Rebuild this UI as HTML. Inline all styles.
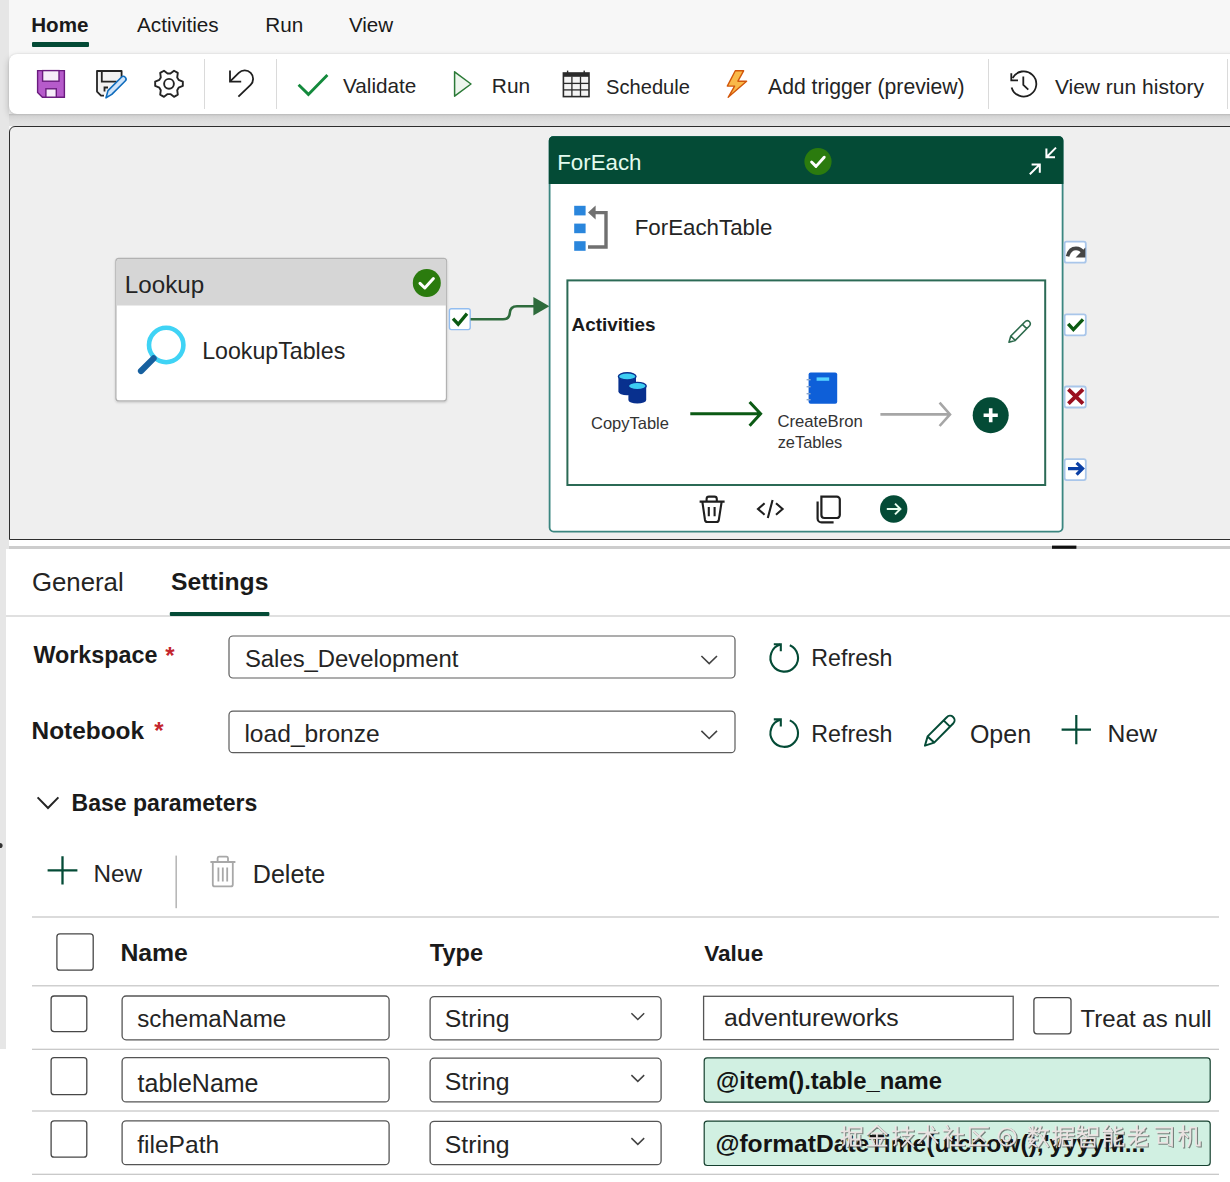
<!DOCTYPE html>
<html><head><meta charset="utf-8"><style>
html,body{margin:0;padding:0}
body{width:1230px;height:1182px;position:relative;overflow:hidden;background:#f7f7f7;font-family:"Liberation Sans",sans-serif}
.b{position:absolute}
.t{position:absolute;line-height:1;white-space:nowrap;font-family:"Liberation Sans",sans-serif}
svg{position:absolute;left:0;top:0}
</style></head><body>
<div class="b" style="left:0;top:0;width:8.5px;height:549px;background:#e6e6e6"></div>
<div class="b" style="left:8.5px;top:54px;width:1240px;height:60px;background:#fff;border-radius:8px;box-shadow:0 3px 7px rgba(0,0,0,0.22),0 0 2px rgba(0,0,0,0.12)"></div>
<div class="b" style="left:32px;top:42px;width:57px;height:5px;background:#044b36;border-radius:1px"></div>
<div class="b" style="left:8.5px;top:114px;width:1240px;height:12px;background:linear-gradient(#b9b9b9 0px,#d3d3d3 2px,#dfdfdf 7px,#e3e3e3 12px)"></div>
<div class="b" style="left:9px;top:126px;width:1240px;height:412px;background:#efefef;border:1px solid #2e2e2e;border-top-left-radius:6px;box-sizing:content-box"></div>
<div class="b" style="left:8.5px;top:540px;width:1240px;height:6px;background:#fff"></div>
<div class="b" style="left:8.5px;top:546px;width:1240px;height:3px;background:#cdcdcd"></div>
<div class="b" style="left:0;top:549px;width:6px;height:500px;background:#e6e6e6"></div>
<div class="b" style="left:6px;top:549px;width:1230px;height:640px;background:#fff"></div>
<div class="b" style="left:0;top:1049px;width:6px;height:140px;background:#fff"></div>
<div class="b" style="left:6px;top:614.5px;width:1230px;height:2px;background:#e0e0e0"></div>
<svg width="1230" height="1182" viewBox="0 0 1230 1182"><defs><filter id="sh" x="-5%" y="-5%" width="110%" height="115%"><feDropShadow dx="0" dy="1" stdDeviation="1" flood-color="#000" flood-opacity="0.18"/></filter><filter id="gl" x="-20%" y="-20%" width="140%" height="140%"><feGaussianBlur stdDeviation="0.5"/></filter></defs>
<path d="M37.6 70.6 H64.4 V97.2 H42.4 L37.6 92.4 Z" fill="#b65bcb" stroke="#6a1b7e" stroke-width="1.4"/>
<rect x="42.6" y="70.6" width="16.4" height="10.6" fill="#f6ecf9" stroke="#6a1b7e" stroke-width="1.4"/>
<rect x="45.9" y="88.8" width="10.4" height="8.4" fill="#f6ecf9" stroke="#6a1b7e" stroke-width="1.4"/>
<path d="M121.6 77 V71 H97 V91.6 L101 95.6 H104" fill="#f2f2f2" stroke="#242424" stroke-width="1.8" stroke-linejoin="round"/>
<path d="M101.8 71 V81.6 H116.6" fill="none" stroke="#242424" stroke-width="1.8"/>
<path d="M104.5 91.5 V87.5 H108" fill="none" stroke="#242424" stroke-width="1.8"/>
<path d="M106 97.8 L108 90.6 L121.4 77.2 A2.6 2.6 0 0 1 125.2 81 L111.8 94.4 Z" fill="#cfe4fa" stroke="#0f6cbd" stroke-width="1.6" stroke-linejoin="round"/>
<path d="M174.02 70.73 L177.81 72.92 L177.22 77.43 L178.63 79.87 L182.83 81.61 L182.83 85.99 L178.63 87.73 L177.22 90.17 L177.81 94.68 L174.02 96.87 L170.41 94.10 L167.59 94.10 L163.98 96.87 L160.19 94.68 L160.78 90.17 L159.37 87.73 L155.17 85.99 L155.17 81.61 L159.37 79.87 L160.78 77.43 L160.19 72.92 L163.98 70.73 L167.59 73.50 L170.41 73.50 Z" fill="none" stroke="#242424" stroke-width="1.9" stroke-linejoin="round"/>
<circle cx="169" cy="83.8" r="4.9" fill="none" stroke="#242424" stroke-width="1.9"/>
<rect x="204.0" y="59" width="1" height="50" fill="#dadada"/>
<rect x="276.0" y="59" width="1" height="50" fill="#dadada"/>
<rect x="988.0" y="59" width="1" height="50" fill="#dadada"/>
<rect x="1227.0" y="59" width="1" height="50" fill="#dadada"/>
<path d="M230 70.5 V81.6 H241.2" fill="none" stroke="#1f1f1f" stroke-width="1.8"/>
<path d="M230.4 81.2 L238.8 72.8 A8.4 8.4 0 0 1 250.6 84.8 L238.4 96.6" fill="none" stroke="#1f1f1f" stroke-width="1.8"/>
<path d="M298.6 84.8 L308.4 94.4 L327.4 75" fill="none" stroke="#138a3c" stroke-width="2.9"/>
<path d="M454.6 71.8 V96.2 L471 84 Z" fill="#eef6ee" stroke="#2b7a37" stroke-width="1.5" stroke-linejoin="round"/>
<rect x="563.4" y="73" width="25.6" height="23.6" fill="#f4f4f4" stroke="#2a2a2a" stroke-width="1.6"/>
<rect x="563.4" y="73" width="25.6" height="3.8" fill="#2a2a2a"/>
<rect x="571.25" y="76.5" width="1.3" height="20" fill="#2a2a2a"/>
<rect x="579.85" y="76.5" width="1.3" height="20" fill="#2a2a2a"/>
<rect x="563.4" y="82.75" width="25.6" height="1.3" fill="#2a2a2a"/>
<rect x="563.4" y="89.25" width="25.6" height="1.3" fill="#2a2a2a"/>
<rect x="566.9" y="70.6" width="1.4" height="4.4" fill="#2a2a2a"/>
<rect x="583.5" y="70.6" width="1.4" height="4.4" fill="#2a2a2a"/>
<path d="M735.3 70.8 L743.6 70.8 L737.9 81.2 L746.6 81.2 L728.2 97.3 L734.6 86.1 L727.3 86.1 Z" fill="#f9b949" stroke="#d2570b" stroke-width="1.4" stroke-linejoin="round"/>
<path d="M1011.6 87.4 A12.6 12.6 0 1 0 1012.6 78" fill="none" stroke="#1f1f1f" stroke-width="1.8"/>
<path d="M1011.3 73.2 V80.4 H1018" fill="none" stroke="#1f1f1f" stroke-width="1.8"/>
<path d="M1023.3 76.4 V84.8 L1028.3 89.6" fill="none" stroke="#1f1f1f" stroke-width="1.8"/>
<rect x="115.9" y="258.5" width="330.6" height="142.4" rx="3" fill="#ffffff" stroke="#b2b2b2" stroke-width="1.3" filter="url(#sh)"/>
<path d="M116.4 305.5 V261.5 A2.6 2.6 0 0 1 119 259 H443.6 A2.6 2.6 0 0 1 446.2 261.5 V305.5 Z" fill="#d6d6d6"/>
<circle cx="426.8" cy="283" r="14" fill="#2b7b0e"/>
<path d="M420 283.4 L424.8 288 L433.4 278.6" fill="none" stroke="#fff" stroke-width="3" stroke-linecap="round" stroke-linejoin="round"/>
<circle cx="166.2" cy="345" r="17.2" fill="none" stroke="#3fd3f5" stroke-width="4.6"/>
<path d="M153.6 358.4 L141 371" fill="none" stroke="#17609f" stroke-width="6.2" stroke-linecap="round"/>
<rect x="449.4" y="308.8" width="20.8" height="20.8" rx="2" fill="#fff" stroke="#92bdf0" stroke-width="1.4"/>
<path d="M453 318.6 L458.2 324.2 L467 313.6" fill="none" stroke="#0b5a12" stroke-width="3.3"/>
<path d="M470.6 319.2 H503 Q509.4 319.2 509.8 313 Q510.2 306.2 517 306.2 H535" fill="none" stroke="#2e6b3c" stroke-width="2.6"/>
<path d="M533.4 297 L549.4 306.2 L533.4 315.4 Z" fill="#2e6b3c"/>
<rect x="549.6" y="137" width="513" height="394.6" rx="4" fill="#ffffff" stroke="#3b8680" stroke-width="1.8"/>
<path d="M548.8 184 V140.5 A4.2 4.2 0 0 1 553 136.3 H1059.2 A4.2 4.2 0 0 1 1063.4 140.5 V184 Z" fill="#044b36"/>
<circle cx="818" cy="161.5" r="13.6" fill="#2b7b0e"/>
<path d="M811.6 162 L816 166.4 L824.2 157.2" fill="none" stroke="#fff" stroke-width="2.9" stroke-linecap="round" stroke-linejoin="round"/>
<path d="M1056 147.6 L1046.4 157.2 M1046.4 148.6 V157.2 H1055" fill="none" stroke="#fff" stroke-width="2"/>
<path d="M1029.8 174.2 L1039.8 164.4 M1031.6 164.4 H1039.8 V172.8" fill="none" stroke="#fff" stroke-width="2"/>
<rect x="574.2" y="205.8" width="11.4" height="9.6" fill="#2a86dc"/>
<rect x="574.2" y="223.6" width="11.4" height="9.6" fill="#2a86dc"/>
<rect x="574.2" y="241.2" width="11.4" height="9.6" fill="#2a86dc"/>
<path d="M594 212.6 H606 V247 H588" fill="none" stroke="#707070" stroke-width="3.4"/>
<path d="M588 212.6 L595.6 205.6 V219.6 Z" fill="#707070"/>
<rect x="567.4" y="280.4" width="477.8" height="204.6" fill="#ffffff" stroke="#2b6a55" stroke-width="2"/>
<path d="M1009 342.2 L1010.8 336 L1025 321.8 A2.5 2.5 0 0 1 1029.6 325.8 L1015.2 340.4 Z M1010.8 336 L1015.2 340.4 M1022.4 324.4 L1027 328.8" fill="none" stroke="#2d6b4d" stroke-width="1.6" stroke-linejoin="round"/>
<path d="M618.4 376.4 V391.6 A8.8 3.6 0 0 0 636 391.6 V376.4 Z" fill="#08308e"/>
<ellipse cx="627.2" cy="376.4" rx="8.8" ry="3.6" fill="#3ccdf2" stroke="#08308e" stroke-width="1.4"/>
<path d="M628.4 386 V400 A8.9 3.6 0 0 0 646.2 400 V386 Z" fill="#08308e"/>
<ellipse cx="637.3" cy="386" rx="8.9" ry="3.6" fill="#3ccdf2" stroke="#08308e" stroke-width="1.4"/>
<path d="M690.3 413.8 H760 M749.6 402 L760.6 413.8 L749.6 425.8" fill="none" stroke="#0b5a14" stroke-width="3" stroke-linejoin="miter"/>
<rect x="808.6" y="372.6" width="28.6" height="31.2" rx="2" fill="#0e5fd8"/>
<rect x="816.6" y="377.4" width="12.6" height="3.4" fill="#55d2ff"/>
<rect x="806.6" y="379" width="4" height="1.4" fill="#8aa6cc"/>
<rect x="806.6" y="386" width="4" height="1.4" fill="#8aa6cc"/>
<rect x="806.6" y="393" width="4" height="1.4" fill="#8aa6cc"/>
<rect x="806.6" y="399" width="4" height="1.4" fill="#8aa6cc"/>
<path d="M880.4 414.4 H949.6 M939.6 402.6 L950 414.4 L939.6 426" fill="none" stroke="#a6a6a6" stroke-width="2.6"/>
<circle cx="990.7" cy="415.2" r="18" fill="#044b36"/>
<path d="M983.6 415.2 H997.8 M990.7 408.2 V422.2" fill="none" stroke="#fff" stroke-width="3.6"/>
<path d="M699.6 501.6 H724.6 M706.6 501.4 V499 A2.4 2.4 0 0 1 709 496.6 H714.4 A2.4 2.4 0 0 1 716.8 499 V501.4 M702.4 502 L705 520 A2.4 2.4 0 0 0 707.4 522 H716.4 A2.4 2.4 0 0 0 718.8 520 L721.6 502 M708.8 507 V516.2 M714.6 507 V516.2" fill="none" stroke="#1f1f1f" stroke-width="2.1" stroke-linejoin="round"/>
<path d="M764.6 503.2 L758 509 L764.6 514.8 M776 503.2 L782.6 509 L776 514.8 M772.6 500 L767.8 518" fill="none" stroke="#1f1f1f" stroke-width="2.1"/>
<path d="M821.4 496.6 H836.8 A3 3 0 0 1 839.8 499.6 V515 A3 3 0 0 1 836.8 518 H824.4 A3 3 0 0 1 821.4 515 Z" fill="none" stroke="#1f1f1f" stroke-width="2.2"/>
<path d="M817.6 501.6 V518.4 A4 4 0 0 0 821.6 522.4 H833.6" fill="none" stroke="#1f1f1f" stroke-width="2.2"/>
<circle cx="893.7" cy="509" r="13.7" fill="#044b36"/>
<path d="M886.8 509 H900.4 M895 503.6 L900.4 509 L895 514.4" fill="none" stroke="#e8fff0" stroke-width="2"/>
<rect x="1064.6" y="241.7" width="21.2" height="21" rx="2" fill="#fff" stroke="#a9c6ea" stroke-width="1.8" filter="url(#gl)"/>
<rect x="1064.6" y="314.3" width="21.2" height="21" rx="2" fill="#fff" stroke="#a9c6ea" stroke-width="1.8" filter="url(#gl)"/>
<rect x="1064.6" y="386.5" width="21.2" height="21" rx="2" fill="#fff" stroke="#a9c6ea" stroke-width="1.8" filter="url(#gl)"/>
<rect x="1064.6" y="459.1" width="21.2" height="21" rx="2" fill="#fff" stroke="#a9c6ea" stroke-width="1.8" filter="url(#gl)"/>
<path d="M1067.6 256.4 Q1069.6 248.4 1076 248.4 Q1080.6 248.4 1083 252.6" fill="none" stroke="#454545" stroke-width="3.6"/>
<path d="M1075.6 257.4 H1085.4 V247.6 Z" fill="#454545"/>
<path d="M1068.2 323.8 L1073.4 329.6 L1083 319.4" fill="none" stroke="#0b5a12" stroke-width="3.4"/>
<path d="M1068.4 389.4 L1083 403.6 M1083 389.4 L1068.4 403.6" fill="none" stroke="#9a0f1f" stroke-width="3.8"/>
<path d="M1068 468.6 H1082.6 M1076.6 462.8 L1082.6 468.6 L1076.6 474.6" fill="none" stroke="#0b3fa5" stroke-width="3.2"/>
<circle cx="0" cy="845.5" r="2.6" fill="#333"/>
<rect x="1052" y="545.6" width="24.4" height="3.2" fill="#111"/>
<rect x="169.8" y="612" width="99.6" height="4" rx="1" fill="#044b36"/>
<rect x="229" y="636.0" width="506" height="42.0" rx="4" fill="#fff" stroke="#5c5c5c" stroke-width="1.2"/>
<path d="M701.4 656.0 L709.2 663.6 L717 656.0" fill="none" stroke="#424242" stroke-width="1.6"/>
<rect x="229" y="711.1" width="506" height="41.60000000000002" rx="4" fill="#fff" stroke="#5c5c5c" stroke-width="1.2"/>
<path d="M701.4 730.9000000000001 L709.2 738.5000000000001 L717 730.9000000000001" fill="none" stroke="#424242" stroke-width="1.6"/>
<path d="M780.3 644.6 A13.8 13.8 0 1 0 789.8 645.2" fill="none" stroke="#044b36" stroke-width="2.1"/>
<path d="M773.8 644.2 H780.8 V651.2" fill="none" stroke="#044b36" stroke-width="2.1"/>
<path d="M780.3 719.8 A13.8 13.8 0 1 0 789.8 720.4" fill="none" stroke="#044b36" stroke-width="2.1"/>
<path d="M773.8 719.4 H780.8 V726.4" fill="none" stroke="#044b36" stroke-width="2.1"/>
<path d="M925 745.6 L927.6 736.4 L946.8 717.2 A3.4 3.4 0 0 1 953.4 723.2 L934.2 742.6 Z M927.6 736.4 L934.2 742.6 M943.6 720.4 L950 726.6" fill="none" stroke="#044b36" stroke-width="2" stroke-linejoin="round"/>
<path d="M1061.6 729.6 H1091 M1076.3 715 V744.2" fill="none" stroke="#044b36" stroke-width="2.2"/>
<path d="M37.6 797.4 L48 808 L58.4 797.4" fill="none" stroke="#242424" stroke-width="2"/>
<path d="M47.6 870.4 H77.4 M62.5 856.2 V884.6" fill="none" stroke="#044b36" stroke-width="2.3"/>
<rect x="175.4" y="855.6" width="1.6" height="52.6" fill="#b8b8b8"/>
<path d="M210.4 862 H235.4 M217.6 861.8 V858 A1.6 1.6 0 0 1 219.2 856.6 H226.4 A1.6 1.6 0 0 1 228 858 V861.8 M212.8 862.4 V884.4 A2 2 0 0 0 214.8 886.4 H230.8 A2 2 0 0 0 232.8 884.4 V862.4 M218.4 867.4 V881.4 M222.8 867.4 V881.4 M227.2 867.4 V881.4" fill="none" stroke="#a8a8a8" stroke-width="1.8"/>
<rect x="32" y="916.4" width="1187" height="1.2" fill="#c4c4c4"/>
<rect x="32" y="985.1999999999999" width="1187" height="1.2" fill="#c4c4c4"/>
<rect x="32" y="1048.7" width="1187" height="1.2" fill="#c4c4c4"/>
<rect x="32" y="1110.4" width="1187" height="1.2" fill="#c4c4c4"/>
<rect x="32" y="1173.7" width="1187" height="1.2" fill="#c4c4c4"/>
<rect x="56.9" y="933.8000000000001" width="36.3" height="36.399999999999906" rx="3" fill="#fff" stroke="#474747" stroke-width="1.3"/>
<rect x="51.1" y="996.0" width="35.7" height="35.600000000000065" rx="3" fill="#fff" stroke="#474747" stroke-width="1.3"/>
<rect x="122.1" y="996.0" width="267" height="43.80000000000011" rx="4" fill="#fff" stroke="#555" stroke-width="1.3"/>
<rect x="430.1" y="996.6" width="231" height="43.20000000000012" rx="4" fill="#fff" stroke="#555" stroke-width="1.3"/>
<path d="M631.4 1013.3000000000001 L637.8 1019.5000000000001 L644.2 1013.3000000000001" fill="none" stroke="#424242" stroke-width="1.5"/>
<rect x="51.1" y="1057.6" width="35.7" height="37.09999999999995" rx="3" fill="#fff" stroke="#474747" stroke-width="1.3"/>
<rect x="122.1" y="1057.6" width="267" height="44.3" rx="4" fill="#fff" stroke="#555" stroke-width="1.3"/>
<rect x="430.1" y="1058.2" width="231" height="43.7" rx="4" fill="#fff" stroke="#555" stroke-width="1.3"/>
<path d="M631.4 1075.15 L637.8 1081.35 L644.2 1075.15" fill="none" stroke="#424242" stroke-width="1.5"/>
<rect x="51.1" y="1120.8" width="35.7" height="36.399999999999906" rx="3" fill="#fff" stroke="#474747" stroke-width="1.3"/>
<rect x="122.1" y="1120.8" width="267" height="43.899999999999906" rx="4" fill="#fff" stroke="#555" stroke-width="1.3"/>
<rect x="430.1" y="1121.4" width="231" height="43.29999999999991" rx="4" fill="#fff" stroke="#555" stroke-width="1.3"/>
<path d="M631.4 1138.15 L637.8 1144.35 L644.2 1138.15" fill="none" stroke="#424242" stroke-width="1.5"/>
<rect x="703.6" y="996.3" width="309.6" height="43.4" fill="#fff" stroke="#555" stroke-width="1.3"/>
<rect x="1033.8999999999999" y="997.6" width="37.09999999999995" height="36.20000000000009" rx="3" fill="#fff" stroke="#474747" stroke-width="1.3"/>
<rect x="704.2" y="1057.9" width="506" height="44.2" rx="3" fill="#d1f0e2" stroke="#16402f" stroke-width="1.2"/>
<rect x="704.2" y="1121.1" width="506" height="44.4" rx="3" fill="#d1f0e2" stroke="#16402f" stroke-width="1.2"/>
</svg>
<div class="t" style="left:31.26px;top:15.26px;font-size:20.6px;font-weight:700;color:#1a1a1a;">Home</div>
<div class="t" style="left:137.00px;top:15.17px;font-size:20.7px;color:#1a1a1a;">Activities</div>
<div class="t" style="left:265.34px;top:15.17px;font-size:20.7px;color:#1a1a1a;">Run</div>
<div class="t" style="left:348.90px;top:15.26px;font-size:20.6px;color:#1a1a1a;">View</div>
<div class="t" style="left:343.10px;top:76.47px;font-size:20.7px;color:#242424;">Validate</div>
<div class="t" style="left:491.83px;top:76.30px;font-size:20.9px;color:#242424;">Run</div>
<div class="t" style="left:606.10px;top:76.98px;font-size:20.1px;color:#242424;">Schedule</div>
<div class="t" style="left:768.00px;top:76.05px;font-size:21.2px;color:#242424;">Add trigger (preview)</div>
<div class="t" style="left:1054.89px;top:76.22px;font-size:21.0px;color:#242424;">View run history</div>
<div class="t" style="left:124.86px;top:272.81px;font-size:24.2px;color:#242424;">Lookup</div>
<div class="t" style="left:202.14px;top:340.06px;font-size:23.2px;color:#242424;">LookupTables</div>
<div class="t" style="left:557.22px;top:152.12px;font-size:22.3px;color:#e3fbef;">ForEach</div>
<div class="t" style="left:634.72px;top:216.52px;font-size:22.3px;color:#242424;">ForEachTable</div>
<div class="t" style="left:571.53px;top:315.80px;font-size:18.9px;font-weight:700;color:#1a1a1a;">Activities</div>
<div class="t" style="left:590.97px;top:414.93px;font-size:16.5px;color:#333;">CopyTable</div>
<div class="t" style="left:777.46px;top:414.06px;font-size:16.7px;color:#333;">CreateBron</div>
<div class="t" style="left:777.64px;top:434.31px;font-size:16.4px;color:#333;">zeTables</div>
<div class="t" style="left:31.91px;top:569.96px;font-size:25.8px;color:#242424;">General</div>
<div class="t" style="left:171.06px;top:570.49px;font-size:24.7px;font-weight:700;color:#1a1a1a;">Settings</div>
<div class="t" style="left:33.50px;top:644.47px;font-size:23.3px;font-weight:700;color:#1a1a1a;">Workspace</div>
<div class="t" style="left:165.28px;top:643.88px;font-size:24px;font-weight:700;color:#c4262e;">*</div>
<div class="t" style="left:31.61px;top:719.14px;font-size:24.4px;font-weight:700;color:#1a1a1a;">Notebook</div>
<div class="t" style="left:154.28px;top:719.48px;font-size:24px;font-weight:700;color:#c4262e;">*</div>
<div class="t" style="left:244.93px;top:647.31px;font-size:23.85px;color:#242424;">Sales_Development</div>
<div class="t" style="left:244.40px;top:721.77px;font-size:24.6px;color:#242424;">load_bronze</div>
<div class="t" style="left:811.34px;top:647.46px;font-size:23.2px;color:#242424;">Refresh</div>
<div class="t" style="left:811.34px;top:722.86px;font-size:23.2px;color:#242424;">Refresh</div>
<div class="t" style="left:969.88px;top:721.53px;font-size:25.0px;color:#242424;">Open</div>
<div class="t" style="left:1107.62px;top:721.79px;font-size:24.7px;color:#242424;">New</div>
<div class="t" style="left:71.50px;top:792.18px;font-size:23.05px;font-weight:700;color:#1a1a1a;">Base parameters</div>
<div class="t" style="left:93.56px;top:862.23px;font-size:24.3px;color:#242424;">New</div>
<div class="t" style="left:252.79px;top:861.55px;font-size:25.1px;color:#242424;">Delete</div>
<div class="t" style="left:120.39px;top:941.00px;font-size:24.8px;font-weight:700;color:#1a1a1a;">Name</div>
<div class="t" style="left:429.76px;top:942.02px;font-size:23.6px;font-weight:700;color:#1a1a1a;">Type</div>
<div class="t" style="left:704.19px;top:942.86px;font-size:22.6px;font-weight:700;color:#1a1a1a;">Value</div>
<div class="t" style="left:137.28px;top:1007.15px;font-size:24.15px;color:#242424;">schemaName</div>
<div class="t" style="left:137.62px;top:1070.83px;font-size:25.0px;color:#242424;">tableName</div>
<div class="t" style="left:137.13px;top:1133.47px;font-size:24.6px;color:#242424;">filePath</div>
<div class="t" style="left:444.78px;top:1006.60px;font-size:24.8px;color:#242424;">String</div>
<div class="t" style="left:444.78px;top:1070.00px;font-size:24.8px;color:#242424;">String</div>
<div class="t" style="left:444.78px;top:1133.00px;font-size:24.8px;color:#242424;">String</div>
<div class="t" style="left:724.01px;top:1006.04px;font-size:24.75px;color:#242424;">adventureworks</div>
<div class="t" style="left:1080.52px;top:1006.98px;font-size:24.0px;color:#242424;">Treat as null</div>
<div class="t" style="left:716.09px;top:1069.01px;font-size:23.85px;font-weight:700;color:#141414;">@item().table_name</div>
<div class="t" style="left:715.45px;top:1131.67px;font-size:24.6px;font-weight:700;color:#141414;">@formatDateTime(utcnow(),'yyyyM...</div>

<svg width="1230" height="1182" viewBox="0 0 1230 1182" style="position:absolute;left:0;top:0"><g fill="none" stroke="#3a3a3a" stroke-opacity="0.6" stroke-width="2.3" stroke-linecap="square"><path transform="translate(841.4,1125.6) scale(0.95)" d="M1 7 H7 M4 2 V20 L2.5 21.5 M1 15.5 L7.5 12.5 M9 3 H22 V8 H9 M9 3 V14 Q9 19 7.5 22.5 M15.5 9 V22 M11 11 V15.5 H20 V11 M11 17.5 V22 H21 V17.5"/><path transform="translate(866.4,1125.6) scale(0.95)" d="M12 1 L2 10 M12 1 L22 10 M7 9 H17 M4 14 H20 M2 22 H22 M12 9 V22 M7 16 L9 20 M17 16 L15 20"/><path transform="translate(892.9,1125.6) scale(0.95)" d="M1 7 H7 M4 2 V20 L2.5 21.5 M1 15.5 L7.5 12.5 M10 6 H22 M16 2 V10.5 M11 11 H21 L11 22.5 M13.5 14 L22.5 22.5"/><path transform="translate(917.4,1125.6) scale(0.95)" d="M2 8 H22 M12 1 V23 M11 9 L2 19 M13 9 L22 19 M16 2 L18 5"/><path transform="translate(942.9,1125.6) scale(0.95)" d="M5 1 L6.5 3.5 M2 6 H9.5 L2 15 M6 10 V23 M7 13 L10 16 M11 10 H22 M16.5 3 V21 M10 21.5 H23"/><path transform="translate(967.9,1125.6) scale(0.95)" d="M22 3 H3 V21.5 H22.5 M7 7 L18 17 M17.5 7 L7 17.5"/><path transform="translate(1027.4,1125.6) scale(0.95)" d="M2 7 H11 M6.5 2 V12 M3 3 L4.5 5.5 M10.5 3 L9 5.5 M6 8 L2 12 M7 8 L11 11 M2 15.5 H11 M6 12 L3.5 18.5 L10 22.5 M9 15.5 L2 23 M15 2 L13 8 M14 6 H22.5 M20 6.5 Q18 16 12.5 22.5 M15 11 L22.5 22.5"/><path transform="translate(1052.9,1125.6) scale(0.95)" d="M1 7 H7 M4 2 V20 L2.5 21.5 M1 15.5 L7.5 12.5 M9 3 H22 V7 H9 M9 3 V14 Q9 19 7.5 22.5 M10 11 H22.5 M16 7.5 V15 M11 15 H21 V22 H11 Z"/><path transform="translate(1077.4,1125.6) scale(0.95)" d="M3 1 L1.5 5 M1.5 5 H10 M1 9 H10.5 M6 2 V9 L1 13.5 M6.5 9.5 L10 12.5 M13 3 H22 V11 H13 Z M5 14 H19 V23 H5 Z M5 18.5 H19"/><path transform="translate(1102.9,1125.6) scale(0.95)" d="M6 1 L2 6.5 H10 M8.5 4 L10.5 7 M3 9 V23 M3 9 H10 V22.5 L8.5 23 M3 13 H10 M3 17 H10 M14 2 V9 H22 V7.5 M20.5 3.5 L14 6 M14 13 V22 H22.5 V20 M20.5 14.5 L14 17.5"/><path transform="translate(1127.4,1125.6) scale(0.95)" d="M4 6 H18 M11 1 V11 M2 11 H22 M19.5 3 L4 20 M10 14 V22 H21.5 V19.5 M19.5 15 L10 18.5"/><path transform="translate(1153.9,1125.6) scale(0.95)" d="M3 3 H20 V22 L16.5 21 M5 8 H16 M6 12 H15 V19 H6 Z"/><path transform="translate(1178.9,1125.6) scale(0.95)" d="M1 7 H10 M5.5 1 V23 M5 8 L1 16 M6 9 L10 13 M13 3 V15 Q13 20 11 22.5 M13 3 H19 V20 Q19 22 21 22 H23 V18"/><g transform="translate(0.9,0.8)"><circle cx="1007" cy="1137" r="8.6"/><circle cx="1006.4" cy="1137.6" r="3.6"/></g></g>
<g fill="none" stroke="#efe6e6" stroke-opacity="0.95" stroke-width="1.9" stroke-linecap="square"><path transform="translate(840.5,1124.8) scale(0.95)" d="M1 7 H7 M4 2 V20 L2.5 21.5 M1 15.5 L7.5 12.5 M9 3 H22 V8 H9 M9 3 V14 Q9 19 7.5 22.5 M15.5 9 V22 M11 11 V15.5 H20 V11 M11 17.5 V22 H21 V17.5"/><path transform="translate(865.5,1124.8) scale(0.95)" d="M12 1 L2 10 M12 1 L22 10 M7 9 H17 M4 14 H20 M2 22 H22 M12 9 V22 M7 16 L9 20 M17 16 L15 20"/><path transform="translate(892,1124.8) scale(0.95)" d="M1 7 H7 M4 2 V20 L2.5 21.5 M1 15.5 L7.5 12.5 M10 6 H22 M16 2 V10.5 M11 11 H21 L11 22.5 M13.5 14 L22.5 22.5"/><path transform="translate(916.5,1124.8) scale(0.95)" d="M2 8 H22 M12 1 V23 M11 9 L2 19 M13 9 L22 19 M16 2 L18 5"/><path transform="translate(942,1124.8) scale(0.95)" d="M5 1 L6.5 3.5 M2 6 H9.5 L2 15 M6 10 V23 M7 13 L10 16 M11 10 H22 M16.5 3 V21 M10 21.5 H23"/><path transform="translate(967,1124.8) scale(0.95)" d="M22 3 H3 V21.5 H22.5 M7 7 L18 17 M17.5 7 L7 17.5"/><path transform="translate(1026.5,1124.8) scale(0.95)" d="M2 7 H11 M6.5 2 V12 M3 3 L4.5 5.5 M10.5 3 L9 5.5 M6 8 L2 12 M7 8 L11 11 M2 15.5 H11 M6 12 L3.5 18.5 L10 22.5 M9 15.5 L2 23 M15 2 L13 8 M14 6 H22.5 M20 6.5 Q18 16 12.5 22.5 M15 11 L22.5 22.5"/><path transform="translate(1052,1124.8) scale(0.95)" d="M1 7 H7 M4 2 V20 L2.5 21.5 M1 15.5 L7.5 12.5 M9 3 H22 V7 H9 M9 3 V14 Q9 19 7.5 22.5 M10 11 H22.5 M16 7.5 V15 M11 15 H21 V22 H11 Z"/><path transform="translate(1076.5,1124.8) scale(0.95)" d="M3 1 L1.5 5 M1.5 5 H10 M1 9 H10.5 M6 2 V9 L1 13.5 M6.5 9.5 L10 12.5 M13 3 H22 V11 H13 Z M5 14 H19 V23 H5 Z M5 18.5 H19"/><path transform="translate(1102,1124.8) scale(0.95)" d="M6 1 L2 6.5 H10 M8.5 4 L10.5 7 M3 9 V23 M3 9 H10 V22.5 L8.5 23 M3 13 H10 M3 17 H10 M14 2 V9 H22 V7.5 M20.5 3.5 L14 6 M14 13 V22 H22.5 V20 M20.5 14.5 L14 17.5"/><path transform="translate(1126.5,1124.8) scale(0.95)" d="M4 6 H18 M11 1 V11 M2 11 H22 M19.5 3 L4 20 M10 14 V22 H21.5 V19.5 M19.5 15 L10 18.5"/><path transform="translate(1153,1124.8) scale(0.95)" d="M3 3 H20 V22 L16.5 21 M5 8 H16 M6 12 H15 V19 H6 Z"/><path transform="translate(1178,1124.8) scale(0.95)" d="M1 7 H10 M5.5 1 V23 M5 8 L1 16 M6 9 L10 13 M13 3 V15 Q13 20 11 22.5 M13 3 H19 V20 Q19 22 21 22 H23 V18"/><circle cx="1007" cy="1137" r="8.6"/><circle cx="1006.4" cy="1137.6" r="3.6"/></g></svg>
</body></html>
